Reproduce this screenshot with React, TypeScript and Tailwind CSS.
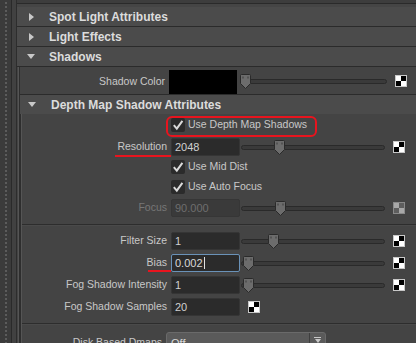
import React from "react";

const font = "font-['Liberation_Sans',Arial,sans-serif]";

const Thumb = ({ left }: { left: number }) => (
  <svg
    width="11"
    height="15"
    viewBox="0 0 11 15"
    className="absolute top-0"
    style={{ left }}
  >
    <path
      d="M1.5 0.5 H9.5 Q10.5 0.5 10.5 1.5 V9.5 L5.5 14.5 L0.5 9.5 V1.5 Q0.5 0.5 1.5 0.5 Z"
      fill="#6c6c6c"
      stroke="#2a2a2a"
    />
    <rect x="2.5" y="2.5" width="1" height="2" fill="#3a3a3a" />
    <rect x="7.5" y="2.5" width="1" height="2" fill="#3a3a3a" />
  </svg>
);

const Slider = ({ width, thumb }: { width: number; thumb: number }) => (
  <div className="relative flex h-[15px] items-center" style={{ width }}>
    <div className="h-[5px] w-full rounded-full border border-[#2a2a2a] bg-[#3a3a3a]" />
    <Thumb left={thumb} />
  </div>
);

const Checker = ({ dim }: { dim?: boolean }) => {
  const w = dim ? "bg-[#a8a8a8]" : "bg-white";
  const b = dim ? "bg-[#5e5e5e]" : "bg-black";
  return (
    <div
      className={`grid h-[12px] w-[12px] shrink-0 grid-cols-2 grid-rows-2 border ${
        dim ? "border-[#8a8a8a]" : "border-[#c8c8c8]"
      }`}
    >
      <div className={w} />
      <div className={b} />
      <div className={b} />
      <div className={w} />
    </div>
  );
};

const Check = () => (
  <div className="flex h-[14px] w-[14px] shrink-0 items-center justify-center rounded-[2px] bg-[#2b2b2b]">
    <svg width="12" height="12" viewBox="0 0 12 12">
      <path
        d="M1.8 6.2 L4.8 9.6 L10.4 1.8"
        fill="none"
        stroke="#dadada"
        strokeWidth="2"
      />
    </svg>
  </div>
);

const CheckRow = ({ label, h }: { label: string; h: string }) => (
  <div className={`flex items-center ${h}`}>
    <div className="w-[149px] shrink-0" />
    <Check />
    <span className="ml-[3px] text-[10.5px] text-[#c8c8c8]">{label}</span>
  </div>
);

type RowProps = {
  label: string;
  value: string;
  thumb?: number;
  focused?: boolean;
  dim?: boolean;
  noSlider?: boolean;
  h?: string;
};

const FieldRow = ({
  label,
  value,
  thumb = 2,
  focused,
  dim,
  noSlider,
  h = "h-[22px]",
}: RowProps) => (
  <div className={`flex items-center ${h}`}>
    <div
      className={`w-[145px] shrink-0 text-right text-[10.5px] ${
        dim ? "text-[#777777]" : "text-[#c8c8c8]"
      }`}
    >
      {label}
    </div>
    <div
      className={`ml-[4px] flex h-[18px] w-[69px] shrink-0 items-center rounded-[2px] border pl-[3px] text-[11px] ${
        focused
          ? "border-[#6a92b8] bg-[#2b2b2b] text-[#d8d8d8]"
          : dim
          ? "border-[#363636] bg-[#3a3a3a] text-[#6e6e6e]"
          : "border-[#353535] bg-[#2b2b2b] text-[#d0d0d0]"
      }`}
    >
      {value}
      {focused && <span className="ml-[1px] h-[12px] w-[1px] bg-[#e0e0e0]" />}
    </div>
    {noSlider ? (
      <div className="ml-[8px]">
        <Checker />
      </div>
    ) : (
      <>
        <div className="ml-[1px]">
          <Slider width={144} thumb={thumb} />
        </div>
        <div className="ml-[8px]">
          <Checker dim={dim} />
        </div>
      </>
    )}
  </div>
);

const Header = ({
  title,
  open,
  pl,
  tl,
}: {
  title: string;
  open?: boolean;
  pl: string;
  tl: string;
}) => (
  <div className={`flex h-[19px] items-center bg-[#4b4b4b] ${pl}`}>
    <div className="flex w-[9px] justify-center">
      {open ? (
        <div className="h-0 w-0 border-x-[4px] border-t-[5px] border-x-transparent border-t-[#c8c8c8]" />
      ) : (
        <div className="h-0 w-0 border-y-[4px] border-l-[5px] border-y-transparent border-l-[#c8c8c8]" />
      )}
    </div>
    <span className={`${tl} whitespace-nowrap text-[12px] font-bold text-[#dcdcdc]`}>
      {title}
    </span>
  </div>
);

const Divider = () => (
  <div className="h-[2px] border-t border-b border-t-[#2d2d2d] border-b-[#4a4a4a]" />
);

export default function App() {
  return (
    <div
      className={`relative flex h-[343px] w-[416px] overflow-hidden bg-[#444444] ${font}`}
    >
      {/* grip strip */}
      <div className="flex w-[11px] shrink-0 flex-col items-center gap-[2px] bg-[#3b3b3b] pt-[2px]">
        {Array.from({ length: 86 }).map((_, i) => (
          <div key={i} className="h-[2px] w-[2px] shrink-0 bg-[#5c5c5c]" />
        ))}
      </div>
      <div className="w-[1px] shrink-0 bg-[#2a2a2a]" />
      <div className="w-[4px] shrink-0 bg-[#414141]" />
      <div className="w-[1px] shrink-0 bg-[#2d2d2d]" />

      <div className="min-w-0 flex-1">
        <div className="h-[3px] bg-[#3d3d3d]" />
        <div className="h-[1px] bg-[#2a2a2a]" />
        <div className="h-[3px] bg-[#454545]" />

        <Header title="Spot Light Attributes" pl="pl-[10px]" tl="ml-[13px]" />
        <div className="h-[1px] bg-[#2b2b2b]" />
        <Header title="Light Effects" pl="pl-[10px]" tl="ml-[13px]" />
        <div className="h-[1px] bg-[#2b2b2b]" />
        <Header title="Shadows" open pl="pl-[9px]" tl="ml-[14px]" />
        <div className="h-[1px] bg-[#2b2b2b]" />

        {/* shadows body */}
        <div className="flex h-[300px] border-l border-[#444444]">
          <div className="w-[1px] shrink-0 bg-[#555555]" />
          <div className="w-[1px] shrink-0 bg-[#2e2e2e]" />
          <div className="min-w-0 flex-1">
            <div className="flex h-[27px] items-start pt-[3px]">
              <div className="flex h-[24px] w-[145px] shrink-0 items-center justify-end text-[10.5px] text-[#c8c8c8]">
                Shadow Color
              </div>
              <div className="ml-[4px] h-[24px] w-[68px] shrink-0 bg-black" />
              <div className="ml-[3px] mt-[4px]">
                <Slider width={147} thumb={0} />
              </div>
              <div className="ml-[8px] mt-[5px]">
                <Checker />
              </div>
            </div>

            <div className="h-[1px] bg-[#2b2b2b]" />
            <Header title="Depth Map Shadow Attributes" open pl="pl-[7px]" tl="ml-[15px]" />

            <div className="flex h-[240px]">
              <div className="w-[1px] shrink-0 bg-[#2e2e2e]" />
              <div className="w-[1px] shrink-0 bg-[#555555]" />
              <div className="min-w-0 flex-1">
                <div className="pb-[5px] pt-[2px]">
                  <CheckRow label="Use Depth Map Shadows" h="h-[17px]" />
                  <div className="mt-[4px]">
                    <FieldRow label="Resolution" value="2048" thumb={33} h="h-[20px]" />
                  </div>
                  <CheckRow label="Use Mid Dist" h="h-[20px]" />
                  <CheckRow label="Use Auto Focus" h="h-[20px]" />
                  <FieldRow label="Focus" value="90.000" thumb={34} dim />
                </div>
                <Divider />
                <div className="pb-[5px] pt-[4px]">
                  <FieldRow label="Filter Size" value="1" thumb={27} />
                  <FieldRow label="Bias" value="0.002" thumb={2} focused />
                  <FieldRow label="Fog Shadow Intensity" value="1" thumb={2} />
                  <FieldRow label="Fog Shadow Samples" value="20" noSlider />
                </div>
                <Divider />
                <div className="flex items-start pt-[7px]">
                  <div className="w-[140px] shrink-0 pt-[3px] text-right text-[10.5px] text-[#c8c8c8]">
                    Disk Based Dmaps
                  </div>
                  <div className="ml-[4px] flex h-[20px] w-[160px] shrink-0 rounded-t-[3px] border border-[#6a6a6a] bg-[#5a5a5a]">
                    <span className="flex-1 pl-[4px] pt-[2px] text-[11px] text-[#d8d8d8]">
                      Off
                    </span>
                    <div className="flex w-[16px] flex-col items-center border-l border-[#3e3e3e] pt-[4px]">
                      <div className="h-[1px] w-[7px] bg-[#c8c8c8]" />
                      <div className="mt-[1px] h-0 w-0 border-x-[3px] border-t-[4px] border-x-transparent border-t-[#c8c8c8]" />
                    </div>
                  </div>
                </div>
              </div>
            </div>
          </div>
        </div>
      </div>

      {/* red annotations */}
      <div className="absolute left-[166px] top-[116px] h-[21px] w-[151px] rounded-[6px] border-[2.5px] border-[#e8141e]" />
      <div className="absolute left-[115px] top-[155px] h-[2px] w-[56px] bg-[#e8141e]" />
      <div className="absolute left-[148px] top-[270px] h-[2px] w-[23px] bg-[#e8141e]" />
    </div>
  );
}
